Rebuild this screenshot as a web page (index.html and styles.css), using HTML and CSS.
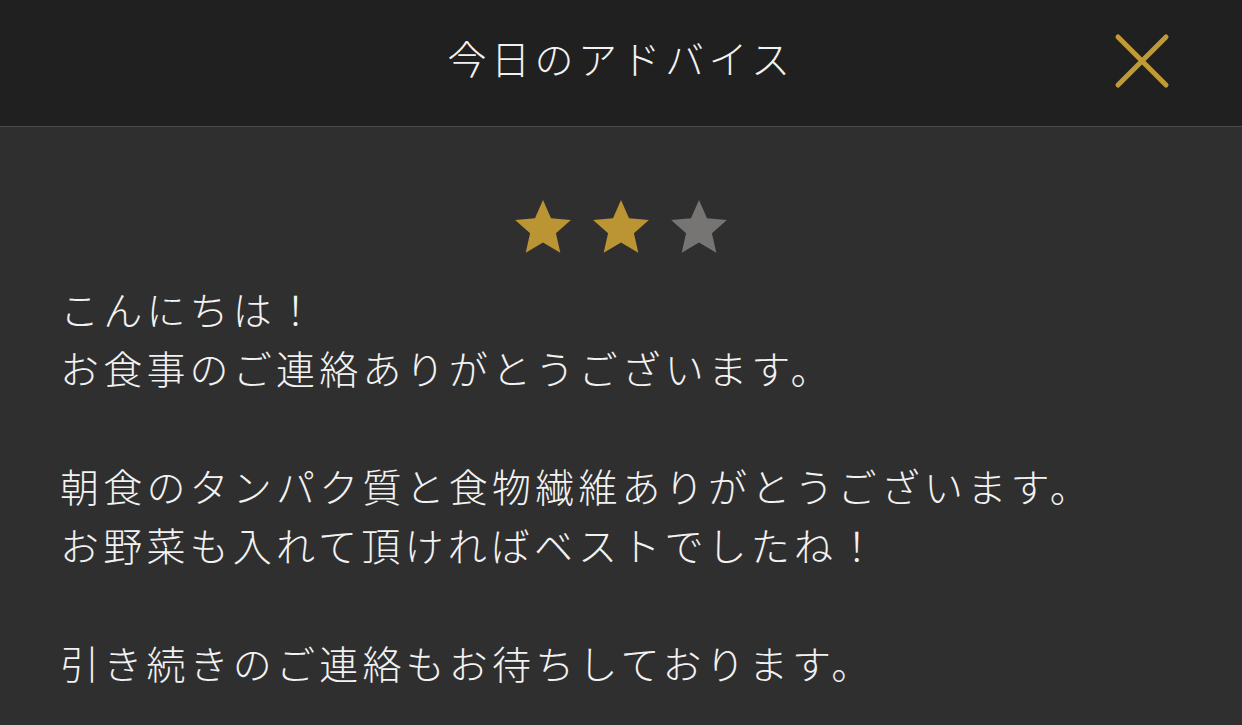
FILE: index.html
```html
<!DOCTYPE html>
<html lang="ja">
<head>
    <meta charset="UTF-8">
    <meta name="viewport" content="width=device-width, initial-scale=1.0">
    <title>今日のアドバイス</title>
    <link rel="stylesheet" href="styles.css">
</head>
<body>
    <header class="top-bar">
        <h1 class="title">今日のアドバイス</h1>
        <button class="close-btn" aria-label="閉じる">
            <svg width="56" height="56" viewBox="0 0 56 56">
                <path d="M4 4 L52 52 M52 4 L4 52" stroke="#c09a35" stroke-width="5" stroke-linecap="round" fill="none"/>
            </svg>
        </button>
    </header>

    <main class="advice">
        <div class="rating">
            <svg class="star on" viewBox="0 0 24 24"><path d="M12 1.5 L15.1 8.6 L22.8 9.3 L17 14.4 L18.7 22 L12 18 L5.3 22 L7 14.4 L1.2 9.3 L8.9 8.6 Z"/></svg>
            <svg class="star on" viewBox="0 0 24 24"><path d="M12 1.5 L15.1 8.6 L22.8 9.3 L17 14.4 L18.7 22 L12 18 L5.3 22 L7 14.4 L1.2 9.3 L8.9 8.6 Z"/></svg>
            <svg class="star" viewBox="0 0 24 24"><path d="M12 1.5 L15.1 8.6 L22.8 9.3 L17 14.4 L18.7 22 L12 18 L5.3 22 L7 14.4 L1.2 9.3 L8.9 8.6 Z"/></svg>
        </div>
        <p class="message">こんにちは！<br>お食事のご連絡ありがとうございます。<br><br>朝食のタンパク質と食物繊維ありがとうございます。<br>お野菜も入れて頂ければベストでしたね！<br><br>引き続きのご連絡もお待ちしております。</p>
    </main>
</body>
</html>
```

FILE: styles.css
```css
body {
    margin: 0;
    background-color: #302f30;
    color: #f2f2f2;
    font-family: "Noto Sans CJK JP", "Noto Sans", sans-serif;
    font-weight: 300;
}
.top-bar {
    position: relative;
    height: 126px;
    background-color: #212021;
    border-bottom: 1px solid #4a494a;
    display: flex;
    align-items: center;
    justify-content: center;
}
.title {
    margin: 0 0 12px;
    font-size: 39px;
    font-weight: 300;
    letter-spacing: 4.5px;
}
.close-btn {
    position: absolute;
    right: 72px;
    top: 33px;
    padding: 0;
    background: none;
    border: none;
    cursor: pointer;
    display: flex;
}
.advice {
    padding: 69px 60px 0;
}
.rating {
    display: flex;
    justify-content: center;
    gap: 16px;
    margin-bottom: 21px;
}
.star {
    width: 62px;
    height: 62px;
    fill: #777474;
}
.star.on {
    fill: #bb9433;
}
.message {
    margin: 0;
    font-size: 39px;
    line-height: 59px;
    letter-spacing: 4.2px;
}
```
